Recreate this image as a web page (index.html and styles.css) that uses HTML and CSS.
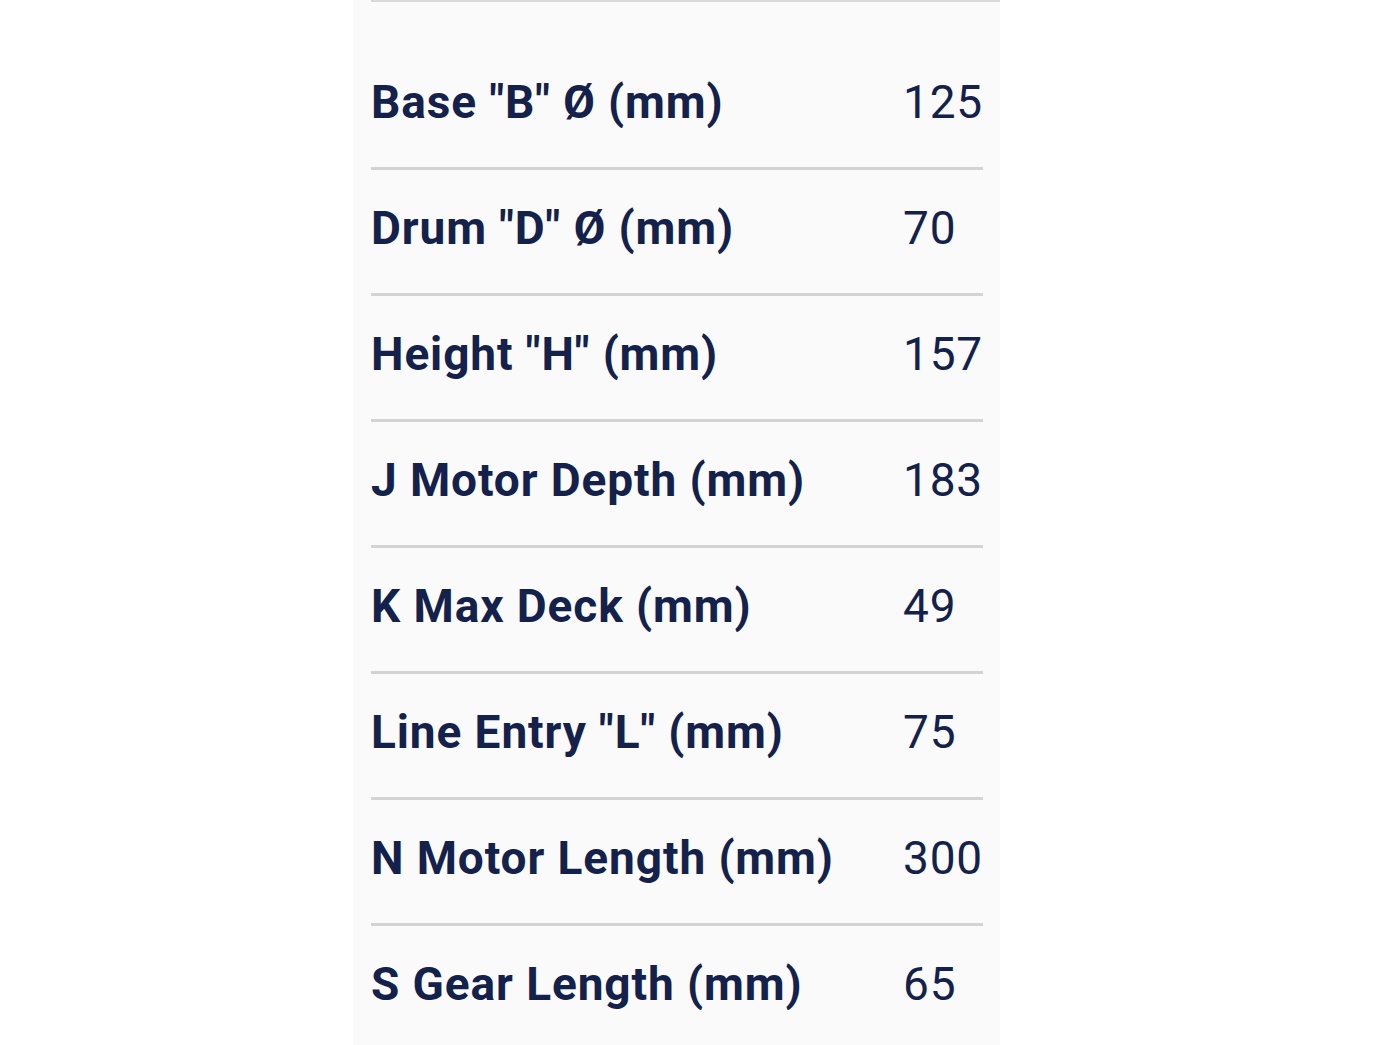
FILE: index.html
```html
<!DOCTYPE html>
<html lang="en">
<head>
<meta charset="utf-8">
<title>Specifications</title>
<link rel="stylesheet" href="styles.css">
</head>
<body>
<div class="panel">
  <div class="top-rule"></div>
  <div class="specs">
    <div class="row"><span class="label">Base "B" Ø (mm)</span><span class="value">125</span></div>
    <div class="row"><span class="label">Drum "D" Ø (mm)</span><span class="value">70</span></div>
    <div class="row"><span class="label">Height "H" (mm)</span><span class="value">157</span></div>
    <div class="row"><span class="label">J Motor Depth (mm)</span><span class="value">183</span></div>
    <div class="row"><span class="label">K Max Deck (mm)</span><span class="value">49</span></div>
    <div class="row"><span class="label">Line Entry "L" (mm)</span><span class="value">75</span></div>
    <div class="row"><span class="label">N Motor Length (mm)</span><span class="value">300</span></div>
    <div class="row"><span class="label">S Gear Length (mm)</span><span class="value">65</span></div>
  </div>
</div>
</body>
</html>
```
FILE: styles.css
```css
html, body {
  margin: 0;
  padding: 0;
  background: #ffffff;
}
body {
  font-family: Roboto, "Liberation Sans", Arial, sans-serif;
  color: #14214b;
}
.panel {
  margin-left: 353px;
  width: 647px;
  min-height: 1045px;
  background: #fafafa;
  box-sizing: border-box;
}
.top-rule {
  margin-left: 18px;
  height: 2px;
  background: #d9d9d9;
}
.specs {
  padding: 42px 17px 0 18px;
}
.row {
  display: flex;
  align-items: center;
  padding: 35px 0 42px;
  font-size: 46px;
  line-height: 46px;
  border-bottom: 3px solid #d3d3d3;
}
.row:last-child {
  border-bottom: none;
}
.label {
  flex: 0 0 532px;
  font-weight: 700;
  letter-spacing: 0.9px;
  white-space: nowrap;
}
.value {
  font-weight: 400;
  letter-spacing: 0.8px;
  white-space: nowrap;
}
```
